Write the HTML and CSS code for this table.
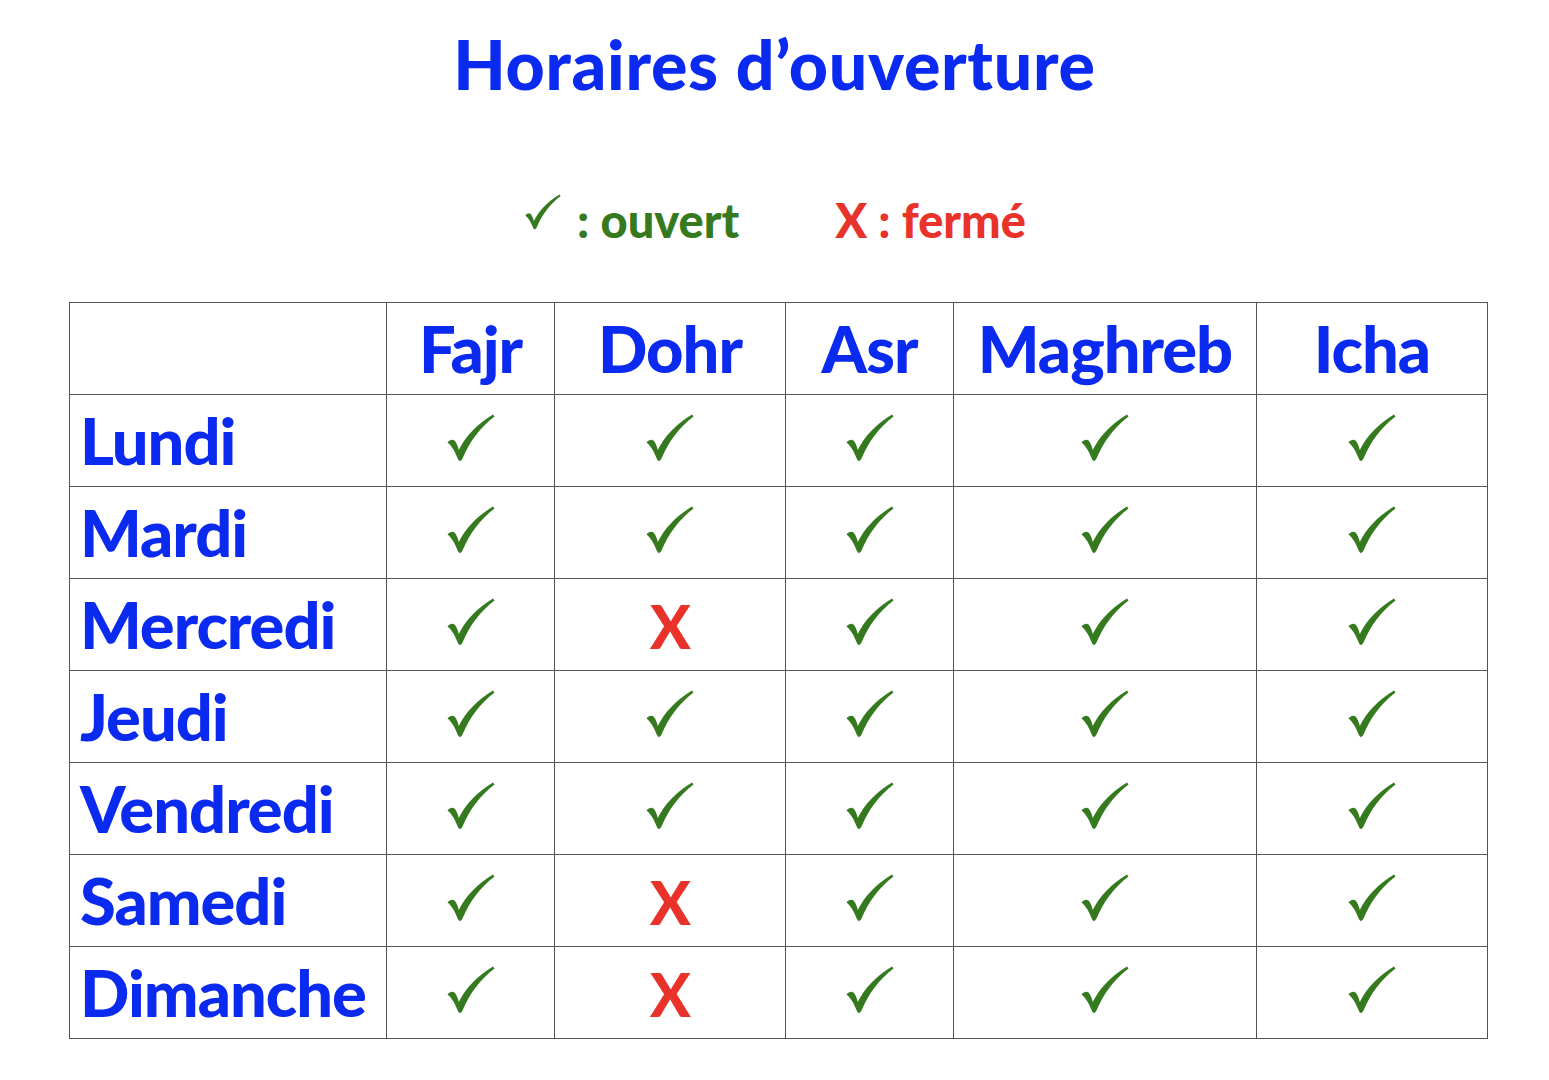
FILE: index.html
```html
<!DOCTYPE html>
<html lang="fr">
<head>
<meta charset="utf-8">
<title>Horaires d'ouverture</title>
<link rel="stylesheet" href="styles.css">
</head>
<body>
<svg width="0" height="0" class="defs">
  <defs>
    <symbol id="chk" viewBox="0 0 48 48">
      <path d="M0.5,28.5 C2.5,26 5.5,25 7.5,26.5 C9.5,28.5 10.8,32 11.8,36 C18,23 30,10 46,0.5 L47.5,2.5 C33,13.5 22.5,28 15.5,44.5 C14.5,47 12.2,47.8 11.2,45.6 C8.5,39 5.5,32.5 0.5,28.5 Z"/>
    </symbol>
  </defs>
</svg>
<h1 class="title">Horaires d’ouverture</h1>
<div class="legend">
  <span class="leg leg-open"><svg class="legchk" viewBox="0 0 48 48"><use href="#chk"/></svg> : ouvert</span>
  <span class="leg leg-closed">X : fermé</span>
</div>
<table class="hours">
  <colgroup>
    <col class="c-day"><col class="c1"><col class="c2"><col class="c3"><col class="c4"><col class="c5">
  </colgroup>
  <thead>
    <tr><th></th><th>Fajr</th><th>Dohr</th><th>Asr</th><th>Maghreb</th><th>Icha</th></tr>
  </thead>
  <tbody id="rows"></tbody>
</table>
<script src="script.js"></script>
</body>
</html>
```
FILE: styles.css
```css
html, body { margin: 0; padding: 0; background: #fff; }
body { font-family: Lato, "Open Sans", "Liberation Sans", sans-serif; width: 1549px; }
.defs { position: absolute; }
.title {
  margin: 0;
  padding-top: 19px;
  text-align: center;
  color: #0a2af0;
  font-weight: 900;
  font-size: 68px;
  line-height: 90px;
  letter-spacing: 0.7px;
}
.legend {
  display: flex;
  justify-content: center;
  gap: 96px;
  margin-top: 86px;
  height: 50px;
  align-items: center;
  font-weight: 900;
  font-size: 47px;
  padding-left: 2px;
}
.leg-open { color: #367a1f; display: flex; align-items: center; }
.leg-closed { color: #e8322a; }
.legchk { width: 36px; height: 36px; fill: #367a1f; margin-right: 16px; position: relative; top: -8px; }
.hours {
  margin: 57px 0 0 69px;
  border-collapse: collapse;
  table-layout: fixed;
  width: 1418px;
}
.c-day { width: 317px; }
.c1 { width: 168px; }
.c2 { width: 231px; }
.c3 { width: 168px; }
.c4 { width: 303px; }
.c5 { width: 231px; }
.hours th, .hours td {
  border: 1px solid #555;
  height: 91px;
  padding: 0;
  text-align: center;
  vertical-align: middle;
  color: #0a2af0;
  font-weight: 900;
  font-size: 65px;
  line-height: 1;
  letter-spacing: -1px;
}
.hours td.day { text-align: left; padding-left: 10px; }
.cellchk { width: 48px; height: 48px; fill: #367a1f; display: block; margin: -6px auto 0; }
.x { color: #e8322a; font-size: 60px; font-weight: 900; }
```
FILE: script.js
```js
const days = ["Lundi","Mardi","Mercredi","Jeudi","Vendredi","Samedi","Dimanche"];
const closed = { "Mercredi": [1], "Samedi": [1], "Dimanche": [1] };
const tb = document.getElementById("rows");
days.forEach(d => {
  const tr = document.createElement("tr");
  const th = document.createElement("td");
  th.className = "day"; th.textContent = d; tr.appendChild(th);
  for (let i = 0; i < 5; i++) {
    const td = document.createElement("td");
    if ((closed[d] || []).includes(i)) {
      td.innerHTML = '<span class="x">X</span>';
    } else {
      td.innerHTML = '<svg class="cellchk" viewBox="0 0 48 48"><use href="#chk"/></svg>';
    }
    tr.appendChild(td);
  }
  tb.appendChild(tr);
});
```
